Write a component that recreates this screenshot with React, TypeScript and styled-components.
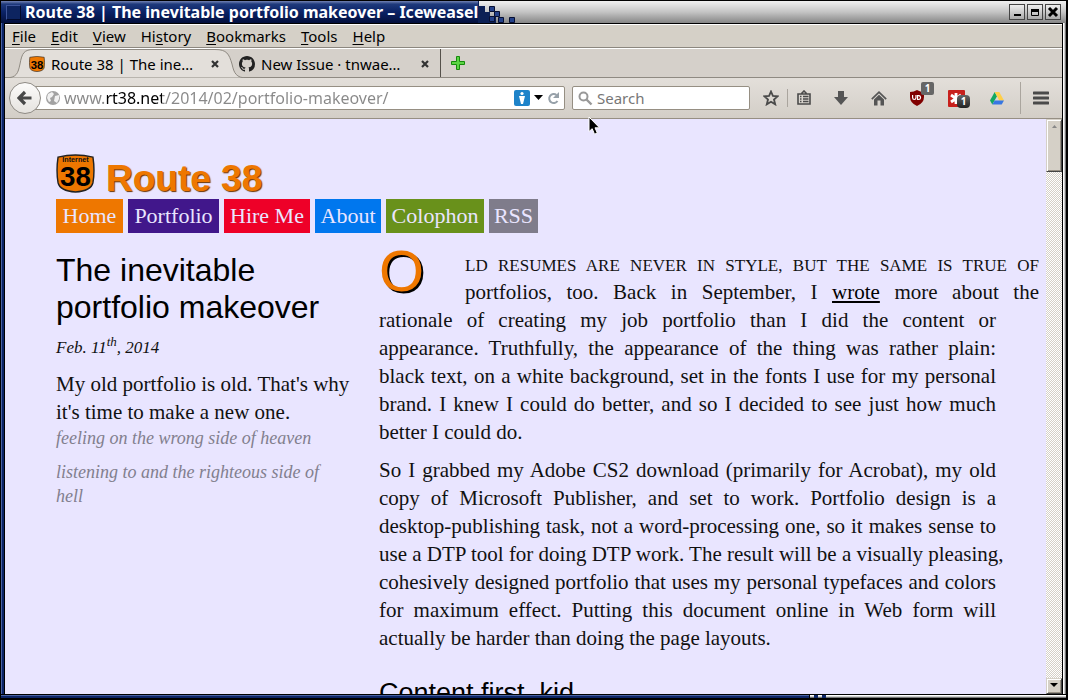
import React from "react";
import styled, { createGlobalStyle } from "styled-components";

const ui = `"Noto Sans", "Open Sans", sans-serif`;
const serif = `"Liberation Serif", serif`;
const sans = `"Liberation Sans", sans-serif`;

const Global = createGlobalStyle`
  * { box-sizing: border-box; }
  body { margin: 0; background: #000; }
  button, input { font: inherit; }
`;

const Window = styled.div`
  height: 100vh;
  display: flex;
  flex-direction: column;
  overflow: hidden;
  padding: 1px 2px 2px 1px;
  background: #000;
  font: 15px/20px ${ui};
  color: #000;
`;

const TitleBar = styled.header`
  flex: none;
  height: 22px;
  display: flex;
  align-items: stretch;
  background: linear-gradient(#f0f0f0, #c4c4c4 50%, #868686);
`;
const TitleText = styled.div`
  display: flex;
  align-items: center;
  gap: 4px;
  padding-left: 5px;
  background: linear-gradient(#7383b4, #1f3a7c 14%, #0a2266 50%, #04103c);
  color: #fff;
  font-weight: 700;
  white-space: nowrap;
  h1 { margin: 0; font-size: 16px; line-height: 20px; width: 453px; }
`;
const WindowMenu = styled.button`
  width: 15px;
  height: 15px;
  padding: 0;
  border: 1px solid;
  border-color: #3e559a #020a2b #020a2b #3e559a;
  background: #0d2460;
`;
const Spacer = styled.div`flex: 1;`;
const WindowButtons = styled.div`
  display: flex;
  align-items: center;
  gap: 2px;
  padding-right: 5px;
`;
const WindowButton = styled.button`
  width: 16px;
  height: 16px;
  padding: 0;
  border: 1px solid #444;
  background: linear-gradient(#eee, #aaa);
  svg { display: block; }
`;

const Middle = styled.div`
  flex: 1;
  min-height: 0;
  display: flex;
`;
const LeftEdge = styled.div`
  width: 4px;
  flex: none;
  background: linear-gradient(90deg, #4a63a4 1px, #0c2466 1px 3px, #000 3px);
`;
const RightEdge = styled.div`
  width: 4px;
  flex: none;
  background: linear-gradient(90deg, #000 1px, #fff 1px 2px, #d0d0d0 2px 3px, #777 3px);
`;
const BottomEdge = styled.div`
  flex: none;
  height: 4px;
  display: flex;
  border-top: 1px solid #000;
  background: linear-gradient(#fff 1px, #ccc 1px 2px, #777 2px);
`;
const BottomActive = styled.div`
  width: 76%;
  border-right: 1px solid #000;
  background: linear-gradient(#4a63a4 1px, #0c2466 1px);
`;
const BottomBlock = styled.div`
  width: 4px;
  margin-left: 4px;
  background: #0c2466;
`;

const Browser = styled.div`
  flex: 1;
  min-width: 0;
  display: flex;
  flex-direction: column;
  border-top: 1px solid #000;
`;
const MenuBar = styled.nav`
  flex: none;
  height: 24px;
  display: flex;
  align-items: center;
  gap: 15px;
  padding-left: 7px;
  border-top: 1px solid #fff;
  border-bottom: 1px solid #8c877f;
  background: #d5d0c7;
`;
const MenuItem = styled.button`
  padding: 0;
  border: 0;
  background: none;
  font-size: 15px;
  line-height: 20px;
  u { text-underline-offset: 2px; }
`;

const TabStrip = styled.div`
  flex: none;
  height: 30px;
  display: flex;
  border-top: 1px solid #fff;
  border-bottom: 1px solid #8f8a82;
  background: #d5d0ca;
`;
const Tab = styled.div<{ $active?: boolean }>`
  position: relative;
  display: flex;
  align-items: center;
  gap: 6px;
  width: ${(p) => (p.$active ? "226px" : "210px")};
  padding-top: 2px;
  padding-left: ${(p) => (p.$active ? "24px" : "8px")};
  padding-right: ${(p) => (p.$active ? "11px" : "10px")};
  border-right: ${(p) => (p.$active ? "0" : "1px solid #55514b")};
  > * { position: relative; }
`;
const TabShape = styled.svg`
  && { position: absolute; }
  left: 0;
  top: 0;
`;
const TabLabel = styled.button`
  flex: 1;
  padding: 0;
  border: 0;
  background: none;
  text-align: left;
  white-space: nowrap;
  font-size: 15px;
  line-height: 20px;
`;
const IconButton = styled.button<{ $w?: number }>`
  width: ${(p) => p.$w ?? 16}px;
  flex: none;
  display: flex;
  align-items: center;
  justify-content: center;
  padding: 0;
  border: 0;
  background: none;
`;

const Toolbar = styled.div`
  flex: none;
  height: 41px;
  display: flex;
  align-items: center;
  padding: 0 1px 0 4px;
  border-bottom: 1px solid #968f83;
  background: linear-gradient(#e3dfda, #d3cec7);
`;
const BackButton = styled.button`
  position: relative;
  z-index: 1;
  flex: none;
  width: 32px;
  height: 32px;
  margin-right: -8px;
  display: flex;
  align-items: center;
  justify-content: center;
  padding: 0;
  border: 1px solid #8f8b85;
  border-radius: 50%;
  background: linear-gradient(#fcfbfa, #e6e3df);
`;
const Field = styled.label<{ $grow?: boolean }>`
  flex: ${(p) => (p.$grow ? "1" : "0 0 178px")};
  min-width: 0;
  height: 24px;
  margin-right: ${(p) => (p.$grow ? "7px" : "0")};
  display: flex;
  align-items: center;
  gap: 4px;
  padding: 0 4px 0 ${(p) => (p.$grow ? "12px" : "5px")};
  border: 1px solid #968f83;
  border-radius: 2px;
  background: #fff;
`;
const AddressInput = styled.input`
  flex: 1;
  min-width: 0;
  padding: 0;
  border: 0;
  outline: 0;
  font-size: 16px;
  line-height: 20px;
  color: transparent;
  background: linear-gradient(90deg, #888 41px, #000 41px 98px, #888 98px);
  background-clip: text;
  -webkit-background-clip: text;
`;
const SearchInput = styled.input`
  flex: 1;
  min-width: 0;
  padding: 0;
  border: 0;
  outline: 0;
  background: none;
  font-size: 15px;
  line-height: 20px;
  &::placeholder { color: #777; opacity: 1; }
`;
const Tools = styled.div`
  display: flex;
  align-items: center;
  padding-left: 5px;
`;
const ToolDivider = styled.div<{ $tall?: boolean }>`
  width: 1px;
  height: ${(p) => (p.$tall ? "32px" : "18px")};
  background: #aaa59e;
`;
const BadgeHolder = styled.span`
  position: relative;
  display: flex;
`;
const Badge = styled.span<{ $low?: boolean }>`
  position: absolute;
  left: ${(p) => (p.$low ? "9px" : "11px")};
  top: ${(p) => (p.$low ? "5px" : "-8px")};
  width: 13px;
  height: 13px;
  border-radius: ${(p) => (p.$low ? "4px" : "2px")};
  background: ${(p) => (p.$low ? "linear-gradient(#666, #222)" : "#666")};
  color: #fff;
  font: 700 10px/13px ${ui};
  text-align: center;
`;

const Viewport = styled.div`
  flex: 1;
  min-height: 0;
  display: flex;
  background: #e9e5ff;
`;
const Page = styled.div`
  flex: 1;
  min-width: 0;
  overflow: hidden;
  padding: 35px 50px 0 51px;
  font: 21px/28px ${serif};
  color: #111;
`;
const Brand = styled.a`
  display: flex;
  align-items: flex-start;
  gap: 11px;
  height: 45px;
  color: #ee7700;
  text-decoration: none;
  font: 700 37px/50px ${sans};
  text-shadow: 1px 1px 1px #6b3300;
`;
const SiteNav = styled.nav`
  display: flex;
  gap: 5px;
`;
const NavLink = styled.a<{ $bg: string; $w: number }>`
  width: ${(p) => p.$w}px;
  background: ${(p) => p.$bg};
  color: #e9e5ff;
  text-decoration: none;
  text-align: center;
  font-size: 22px;
  line-height: 34px;
  white-space: nowrap;
`;
const Columns = styled.main`
  display: grid;
  grid-template-columns: 294fr 617fr;
  column-gap: 29px;
  padding-top: 17px;
`;
const Aside = styled.div`
  padding-top: 2px;
  min-width: 0;
  p { margin: 0; white-space: nowrap; }
`;
const PostTitle = styled.h2`
  margin: 0 0 8px;
  font: 400 32px/37px ${sans};
  color: #000;
`;
const PostDate = styled.div`
  margin-bottom: 8px;
  font: italic 17px/28px ${serif};
  sup { font-size: 13px; line-height: 0; }
`;
const Mood = styled.div`
  margin-bottom: 10px;
  font: italic 18px/24px ${serif};
  color: #827f8e;
`;
const Article = styled.article`min-width: 0;`;
const Para = styled.p`margin: 0 0 10px;`;
const Line = styled.span<{ $lead?: boolean; $last?: boolean }>`
  display: block;
  white-space: nowrap;
  text-align: justify;
  text-align-last: ${(p) => (p.$last ? "left" : "justify")};
  margin-left: ${(p) => (p.$lead ? "86px" : "0")};
  margin-right: ${(p) => (p.$lead ? "-43px" : "0")};
  a { color: #000; }
`;
const Caps = styled.span`
  text-transform: uppercase;
  font-size: 17px;
  line-height: 20px;
`;
const DropCap = styled.span`
  float: left;
  width: 86px;
  margin-right: -86px;
  font: 58px/42px ${sans};
  color: #ee7700;
  text-shadow: 2px 2px 0 #000;
`;
const SubHead = styled.h3`
  margin: 0;
  padding-top: 15px;
  font: 400 27px/32px ${sans};
  color: #000;
  white-space: nowrap;
`;

const ScrollBar = styled.div`
  flex: none;
  width: 16px;
  display: flex;
  flex-direction: column;
  justify-content: space-between;
  background: repeating-conic-gradient(#fff 0 25%, #d5d0c7 0 50%) 0 0 / 2px 2px;
`;
const ScrollPiece = styled.button<{ $h: number }>`
  height: ${(p) => p.$h}px;
  padding: 3px 0 0;
  border: 1px solid;
  border-color: #d5d0c7 #444 #444 #d5d0c7;
  box-shadow: inset 1px 1px #fff, inset -1px -1px #968f83;
  background: #d5d0c7;
  display: flex;
  justify-content: center;
  align-items: flex-start;
`;
const Pointer = styled.svg`
  position: absolute;
  left: 588px;
  top: 116px;
`;
const ShieldSvg = styled.svg`
  flex: none;
  text-shadow: none;
  font-family: ${sans};
  font-weight: 700;
`;

const Shield = ({ size }: { size: number }) => (
  <ShieldSvg width={size} height={size} viewBox="0 0 38 38" aria-hidden="true">
    <path d="M2 3Q19-1 36 3Q38 16 36 28Q34 36 19 37Q4 36 2 28Q0 16 2 3Z" fill="#ee7700" stroke="#222" strokeWidth="1.4" />
    {size > 20 && <text x="19" y="8" textAnchor="middle" fontSize="7" fill="#111">Internet</text>}
    <text x="19" y="31" textAnchor="middle" fontSize="27" fill="#000">38</text>
  </ShieldSvg>
);
const CloseGlyph = () => (
  <svg width="8" height="8" viewBox="0 0 8 8"><path d="M1 1L7 7M7 1L1 7" stroke="#333" strokeWidth="2.2" /></svg>
);

const menus = ["File", "Edit", "View", "History", "Bookmarks", "Tools", "Help"];
const links: [string, string, number][] = [
  ["Home", "#ee7700", 67],
  ["Portfolio", "#41178b", 91],
  ["Hire Me", "#ee0028", 86],
  ["About", "#0077ee", 66],
  ["Colophon", "#69911b", 98],
  ["RSS", "#7f7c8b", 49],
];
const firstLines = [
  "rationale of creating my job portfolio than I did the content or",
  "appearance. Truthfully, the appearance of the thing was rather plain:",
  "black text, on a white background, set in the fonts I use for my personal",
  "brand. I knew I could do better, and so I decided to see just how much",
];
const secondLines = [
  "So I grabbed my Adobe CS2 download (primarily for Acrobat), my old",
  "copy of Microsoft Publisher, and set to work. Portfolio design is a",
  "desktop-publishing task, not a word-processing one, so it makes sense to",
  "use a DTP tool for doing DTP work. The result will be a visually pleasing,",
  "cohesively designed portfolio that uses my personal typefaces and colors",
  "for maximum effect. Putting this document online in Web form will",
];

export default function App() {
  return (
    <>
      <Global />
      <Window>
        <TitleBar>
          <TitleText>
            <WindowMenu aria-label="Window menu" />
            <h1>Route 38 | The inevitable portfolio makeover – Iceweasel</h1>
          </TitleText>
          <svg width="44" height="22" viewBox="0 0 44 22" aria-hidden="true">
            <path d="M0 0V22H18V16H12V11H7V5H1V0Z" fill="#0c2055" />
            <g fill="#24418a" stroke="#071033">
              <path d="M11.500 5.500h5v5h-5zM16.500 10.500h5v5h-5zM11.500 15.500h5v5h-5zM20.500 16.500h5v5h-5zM31.500 16.500h5v5h-5z" />
            </g>
          </svg>
          <Spacer />
          <WindowButtons>
            <WindowButton aria-label="Minimize"><svg width="14" height="14"><path d="M4 10H11" stroke="#000" strokeWidth="2" /></svg></WindowButton>
            <WindowButton aria-label="Maximize"><svg width="14" height="14"><path d="M3.500 4.500H10.500V10.500H3.500Z" fill="none" stroke="#000" /><path d="M3 5.500H11" stroke="#000" strokeWidth="3" /></svg></WindowButton>
            <WindowButton aria-label="Close"><svg width="14" height="14"><path d="M3 3L11 11M11 3L3 11" stroke="#000" strokeWidth="3" /></svg></WindowButton>
          </WindowButtons>
        </TitleBar>
        <Middle>
          <LeftEdge />
          <Browser>
            <MenuBar>
              {menus.map((m) => {
                const k = m === "History" ? 2 : 0;
                return (
                  <MenuItem key={m}>{m.slice(0, k)}<u>{m[k]}</u>{m.slice(k + 1)}</MenuItem>
                );
              })}
            </MenuBar>
            <TabStrip>
              <Tab $active>
                <TabShape width="240" height="29" viewBox="0 0 240 29">
                  <path d="M0 29C12 29 13 24 15 15C17 4 19 .5 29 .5H210C222 .5 224 5 227 15C229 24 231 29 242 29Z" fill="#e3dfda" stroke="#8f8a82" />
                </TabShape>
                <Shield size={16} />
                <TabLabel>Route 38 | The ine…</TabLabel>
                <IconButton $w={10} aria-label="Close tab"><CloseGlyph /></IconButton>
              </Tab>
              <Tab>
                <svg width="16" height="16" viewBox="0 0 16 16" aria-hidden="true"><path fill="#222" d="M8 0C3.580 0 0 3.580 0 8c0 3.540 2.290 6.530 5.470 7.590.4.070.55-.17.55-.38 0-.19-.01-.82-.01-1.490-2.010.37-2.530-.49-2.690-.94-.09-.23-.48-.94-.82-1.130-.28-.15-.68-.52-.01-.53.63-.01 1.080.58 1.230.82.72 1.210 1.870.87 2.330.66.070-.52.28-.87.51-1.070-1.780-.2-3.640-.89-3.640-3.950 0-.87.31-1.590.82-2.150-.08-.2-.36-1.020.08-2.120 0 0 .67-.21 2.200.82.64-.18 1.320-.27 2-.27s1.360.09 2 .27c1.530-1.040 2.200-.82 2.200-.82.44 1.100.16 1.920.08 2.120.51.56.82 1.270.82 2.150 0 3.070-1.870 3.750-3.650 3.950.29.25.54.73.54 1.480 0 1.070-.01 1.930-.01 2.200 0 .21.15.46.55.38A8.010 8.010 0 0 0 16 8c0-4.420-3.580-8-8-8z" /></svg>
                <TabLabel>New Issue · tnwae…</TabLabel>
                <IconButton $w={10} aria-label="Close tab"><CloseGlyph /></IconButton>
              </Tab>
              <IconButton $w={34} aria-label="New tab">
                <svg width="14" height="14" viewBox="0 0 14 14"><path d="M5.500 .5H8.500V5.500H13.500V8.500H8.500V13.500H5.500V8.500H.5V5.500H5.500Z" fill="#5bd544" stroke="#168a0c" /></svg>
              </IconButton>
            </TabStrip>
            <Toolbar>
              <BackButton aria-label="Back">
                <svg width="16" height="16" viewBox="0 0 16 16"><path d="M8 2L2 8L8 14M2.500 8H14.500" fill="none" stroke="#484848" strokeWidth="3.200" /></svg>
              </BackButton>
              <Field $grow>
                <svg width="14" height="14" viewBox="0 0 14 14" aria-hidden="true"><circle cx="7" cy="7" r="7" fill="#a2a2a2" /><path d="M2 3L6 1L8 3L6 6L4 7L5 10L3 11L1 7ZM9 5L13 4V8L11 12L8 10Z" fill="#f1f1f1" /></svg>
                <AddressInput aria-label="Address" defaultValue="www.rt38.net/2014/02/portfolio-makeover/" />
                <svg width="16" height="16" viewBox="0 0 16 16" aria-hidden="true"><rect width="16" height="16" rx="2" fill="#1e83c9" /><circle cx="8" cy="3.500" r="1.600" fill="#fff" /><path d="M5 6H11L10 10L9 14H7L6 10Z" fill="#fff" /></svg>
                <svg width="9" height="6" viewBox="0 0 9 6" aria-hidden="true"><path d="M0 0H9L4.500 5Z" /></svg>
                <IconButton $w={13} aria-label="Reload">
                  <svg width="13" height="13" viewBox="0 0 13 13"><path d="M9.500 3A4.500 4.500 0 1 0 10.500 9" fill="none" stroke="#97a1a9" strokeWidth="2" /><path d="M12 0V6H6Z" fill="#97a1a9" /></svg>
                </IconButton>
              </Field>
              <Field>
                <svg width="15" height="15" viewBox="0 0 15 15" aria-hidden="true"><circle cx="5.500" cy="5.500" r="4" fill="none" stroke="#999" strokeWidth="2" /><path d="M8.500 8.500L13.500 13.500" stroke="#999" strokeWidth="2.400" /></svg>
                <SearchInput aria-label="Search" placeholder="Search" />
              </Field>
              <Tools>
                <IconButton $w={32} aria-label="Bookmark this page">
                  <svg width="16" height="16" viewBox="0 0 16 16"><path d="M8 1.500L9.900 5.900L14.700 6.300L11 9.500L12.200 14.300L8 11.700L3.800 14.300L5 9.500L1.300 6.300L6.100 5.900Z" fill="none" stroke="#4a4a4a" strokeWidth="1.800" /></svg>
                </IconButton>
                <ToolDivider />
                <IconButton $w={31} aria-label="Bookmarks">
                  <svg width="14" height="16" viewBox="0 0 14 16"><path d="M1 4H13V14H1ZM4.500 3.500L7 1L9.500 3.500" fill="none" stroke="#4a4a4a" strokeWidth="1.600" /><path d="M3 6.500H4.500M6 6.500H11.500M3 9H4.500M6 9H11.500M3 11.500H4.500M6 11.500H11.500" stroke="#4a4a4a" strokeWidth="1.400" /></svg>
                </IconButton>
                <IconButton $w={44} aria-label="Downloads">
                  <svg width="14" height="14" viewBox="0 0 14 14"><path d="M4 0H10V6H14L7 14L0 6H4Z" fill="#555" /></svg>
                </IconButton>
                <IconButton $w={32} aria-label="Home">
                  <svg width="16" height="15" viewBox="0 0 16 15"><path d="M.8 8.200L8 1.200L15.200 8.200" fill="none" stroke="#555" strokeWidth="1.700" /><path d="M3 8.500L8 3.700L13 8.500V14.500H9.500V9.500H6.500V14.500H3Z" fill="#555" /></svg>
                </IconButton>
                <IconButton $w={44} aria-label="uBlock">
                  <BadgeHolder>
                    <svg width="14" height="16" viewBox="0 0 14 16"><path d="M7 0Q10 2 14 2V7Q14 13 7 16Q0 13 0 7V2Q4 2 7 0Z" fill="#800000" /><path d="M2.600 5V7.500Q2.600 9.500 4.300 9.500Q6 9.500 6 7.500V5M7.600 5.600V9.500H9A2 2 0 0 0 9 5.600Z" fill="none" stroke="#fff" strokeWidth="1.200" /></svg>
                    <Badge>1</Badge>
                  </BadgeHolder>
                </IconButton>
                <IconButton $w={35} aria-label="RequestPolicy">
                  <BadgeHolder>
                    <svg width="17" height="17" viewBox="0 0 17 17"><rect width="17" height="17" rx="1" fill="#c8201c" /><path d="M8 3V14M3 5L13 12M13 5L3 12" stroke="#fff" strokeWidth="2.800" /></svg>
                    <Badge $low>1</Badge>
                  </BadgeHolder>
                </IconButton>
                <IconButton $w={46} aria-label="Drive">
                  <svg width="14" height="13" viewBox="0 0 14 13"><path d="M4.700 0L0 8.500L2.300 12.500L7 4.200Z" fill="#11a861" /><path d="M4.700 0H9.300L14 8.500H9.300Z" fill="#ffcf48" /><path d="M4.700 8.500H14L11.700 12.500H2.300Z" fill="#3777e3" /></svg>
                </IconButton>
                <ToolDivider $tall />
                <IconButton $w={40} aria-label="Menu">
                  <svg width="16" height="14" viewBox="0 0 16 14"><path d="M1 2H15M1 7H15M1 12H15" stroke="#4a4a4a" strokeWidth="3" strokeLinecap="round" /></svg>
                </IconButton>
              </Tools>
            </Toolbar>
            <Viewport>
              <Page>
                <Brand href="#"><Shield size={39} />Route 38</Brand>
                <SiteNav>
                  {links.map(([t, c, w]) => (
                    <NavLink key={t} href="#" $bg={c} $w={w}>{t}</NavLink>
                  ))}
                </SiteNav>
                <Columns>
                  <Aside>
                    <PostTitle>The inevitable portfolio makeover</PostTitle>
                    <PostDate>Feb. 11<sup>th</sup>, 2014</PostDate>
                    <p>My old portfolio is old. That's why<br />it's time to make a new one.</p>
                    <Mood>feeling on the wrong side of heaven</Mood>
                    <Mood>listening to and the righteous side of<br />hell</Mood>
                  </Aside>
                  <Article>
                    <Para>
                      <DropCap>O</DropCap>
                      <Line $lead><Caps>ld resumes are never in style, but the same is true of</Caps></Line>
                      <Line $lead>portfolios, too. Back in September, I <a href="#">wrote</a> more about the</Line>
                      {firstLines.map((l) => <Line key={l}>{l}</Line>)}
                      <Line $last>better I could do.</Line>
                    </Para>
                    <Para>
                      {secondLines.map((l) => <Line key={l}>{l}</Line>)}
                      <Line $last>actually be harder than doing the page layouts.</Line>
                    </Para>
                    <SubHead>Content first, kid</SubHead>
                  </Article>
                </Columns>
              </Page>
              <ScrollBar>
                <ScrollPiece $h={53} aria-label="Scroll up"><svg width="5" height="6"><path d="M0 5L2.500 2L5 5Z" fill="#888" /></svg></ScrollPiece>
                <ScrollPiece $h={16} aria-label="Scroll down"><svg width="8" height="6"><path d="M0 1H8L4 5Z" /></svg></ScrollPiece>
              </ScrollBar>
            </Viewport>
          </Browser>
          <RightEdge />
        </Middle>
        <BottomEdge><BottomActive /><BottomBlock /><BottomBlock /></BottomEdge>
      </Window>
      <Pointer width="14" height="20" viewBox="0 0 14 20" aria-hidden="true">
        <path d="M1 1V15.500L4.200 12.700L6.500 18.200L9.300 17L7 11.800H11.500Z" fill="#000" stroke="#fff" />
      </Pointer>
    </>
  );
}
